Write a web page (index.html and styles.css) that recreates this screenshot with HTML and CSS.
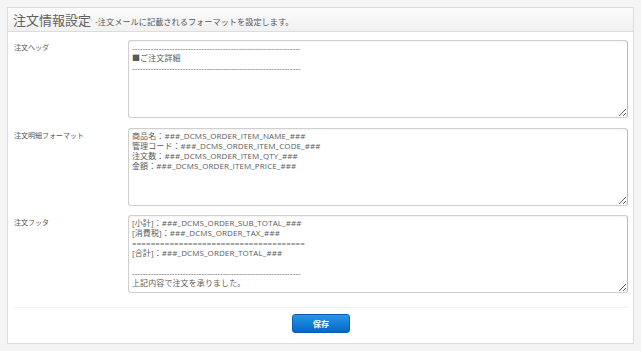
FILE: index.html
```html
<!DOCTYPE html>
<html lang="ja">
<head>
  <meta charset="UTF-8" />
  <title>注文情報設定</title>
  <link rel="stylesheet" href="styles.css">
</head>
<body>
  <div class="panel">
    <div class="panel-head">
      <h2>注文情報設定</h2>
      <span class="sub">-注文メールに記載されるフォーマットを設定します。</span>
    </div>

    <form class="panel-body">
      <div class="row">
        <label for="head">注文ヘッダ</label>
        <textarea id="head" spellcheck="false">---------------------------------------------------------------
■ご注文詳細
---------------------------------------------------------------</textarea>
      </div>

      <div class="row">
        <label for="item">注文明細フォーマット</label>
        <textarea id="item" spellcheck="false">商品名：###_DCMS_ORDER_ITEM_NAME_###
管理コード：###_DCMS_ORDER_ITEM_CODE_###
注文数：###_DCMS_ORDER_ITEM_QTY_###
金額：###_DCMS_ORDER_ITEM_PRICE_###</textarea>
      </div>

      <div class="row">
        <label for="foot">注文フッタ</label>
        <textarea id="foot" spellcheck="false">[小計]：###_DCMS_ORDER_SUB_TOTAL_###
[消費税]：###_DCMS_ORDER_TAX_###
=====================================
[合計]：###_DCMS_ORDER_TOTAL_###

---------------------------------------------------------------
上記内容で注文を承りました。</textarea>
      </div>

      <div class="actions">
        <button type="button" class="btn">保存</button>
      </div>
    </form>
  </div>
</body>
</html>
```

FILE: styles.css
```css
* {
  box-sizing: border-box;
  margin: 0;
  padding: 0;
}

body {
  background: #f4f4f4;
  padding: 7px;
  font-family: "Noto Sans CJK JP", "Noto Sans", sans-serif;
  color: #555;
}

.panel {
  background: #fff;
  border: 1px solid #dcdcdc;
  height: 337px;
}

.panel-head {
  display: flex;
  align-items: baseline;
  gap: 4px;
  height: 24px;
  padding: 3px 5px 0;
  background: linear-gradient(#fbfbfb, #f1f1f1);
  border-bottom: 1px solid #dcdcdc;
}

.panel-head h2 {
  font-size: 13px;
  font-weight: normal;
  color: #606060;
  line-height: 18px;
}

.panel-head .sub {
  font-size: 8.2px;
  color: #555;
}

.panel-body {
  padding: 8px 5px 0 6px;
}

.row {
  display: flex;
  margin-bottom: 10px;
}

.row:nth-child(2) {
  margin-bottom: 9px;
}

.row label {
  width: 114px;
  flex-shrink: 0;
  font-size: 7px;
  line-height: 10px;
  padding-top: 2px;
  color: #555;
}

.row textarea {
  width: 500px;
  height: 78px;
  padding: 2px 3px;
  font-family: "Open Sans", "Noto Sans CJK JP", sans-serif;
  font-size: 8px;
  line-height: 10px;
  letter-spacing: 0.1px;
  color: #5a5a5a;
  border: 1px solid #cfcfcf;
  border-right-color: #bdbdbd;
  border-radius: 3px;
  box-shadow: inset 0 1px 2px rgba(0, 0, 0, 0.06);
  resize: vertical;
  outline: none;
}

.actions {
  display: flex;
  justify-content: center;
  margin-top: 14px;
  padding-top: 6px;
  border-top: 1px solid #eee;
  width: 614px;
}

.btn {
  width: 58px;
  height: 19px;
  font-family: inherit;
  font-size: 8px;
  font-weight: bold;
  color: #fff;
  background: linear-gradient(#2597e6, #0866c6);
  border: 1px solid #0a5db3;
  border-radius: 3px;
  cursor: pointer;
}
```
